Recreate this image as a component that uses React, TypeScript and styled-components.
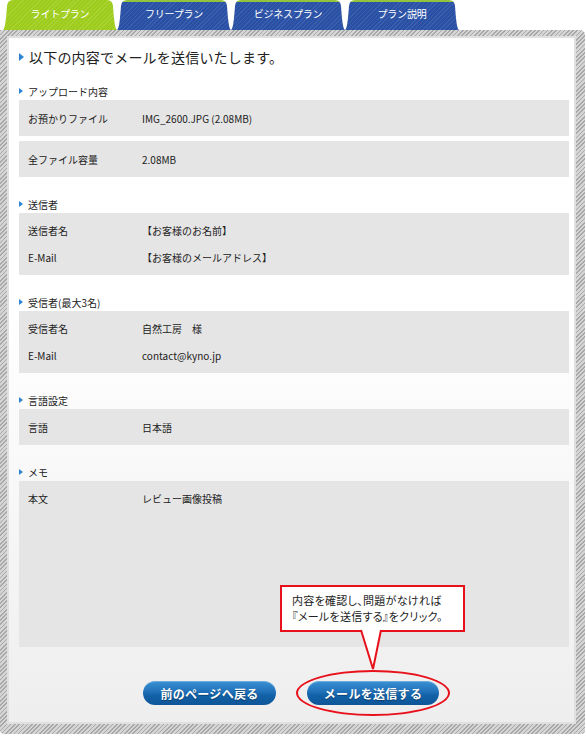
import React from 'react';
import styled, { createGlobalStyle } from 'styled-components';

const Global = createGlobalStyle`
  html, body { margin: 0; padding: 0; background: #fff; }
  body { font-family: "Noto Sans CJK JP", "Noto Sans", sans-serif; color: #222; }
`;

const Page = styled.div`
  width: 586px;
`;

const TabBar = styled.div`
  display: flex;
  height: 30px;
  padding-left: 3px;
`;

const Tab = styled.div<{ $active?: boolean }>`
  width: 114px;
  height: 30px;
  box-sizing: border-box;
  clip-path: path('M0 30 C2 29 3 20 4 6 Q4.5 0 10 0 L104 0 Q109.5 0 110 6 C111 20 112 29 114 30 Z');
  background: ${(p) =>
    p.$active
      ? 'repeating-linear-gradient(135deg, #9dcc1c 0 2px, #a8d332 2px 3px)'
      : 'repeating-linear-gradient(135deg, #2a50a3 0 2px, #3a5fb0 2px 3px)'};
  border-top: ${(p) => (p.$active ? '0' : '2px solid #93c33a')};
  padding-top: ${(p) => (p.$active ? 7 : 5)}px;
  color: #fff;
  font-size: 10px;
  line-height: 13px;
  letter-spacing: -0.2px;
  text-align: center;
`;

const Frame = styled.div`
  width: 585px;
  box-sizing: border-box;
  padding: 6px 9px 10px 7px;
  background: repeating-linear-gradient(135deg, #a8a8a8 0 1.2px, #d5d5d5 1.2px 3px);
  border-radius: 0 5px 4px 4px;
`;

const Panel = styled.div`
  border: 2px solid #e0e0e0;
  background: linear-gradient(#fff 0%, #fff 40%, #eeeeee 100%);
  padding: 9px 5px 17px 10px;
`;

const Heading = styled.h1`
  margin: 0 0 15px;
  display: flex;
  align-items: center;
  gap: 5px;
  font-size: 14px;
  font-weight: normal;
  line-height: 20px;
  letter-spacing: 0.2px;
  color: #222;
  &::before {
    content: '';
    border-left: 5px solid #2d84d4;
    border-top: 4px solid transparent;
    border-bottom: 4px solid transparent;
  }
`;

const SectionTitle = styled.h2<{ $first?: boolean }>`
  margin: ${(p) => (p.$first ? 0 : 18)}px 0 0;
  height: 18px;
  display: flex;
  align-items: center;
  gap: 5px;
  font-size: 10px;
  font-weight: normal;
  color: #222;
  &::before {
    content: '';
    border-left: 4px solid #2d84d4;
    border-top: 3.5px solid transparent;
    border-bottom: 3.5px solid transparent;
  }
`;

const Stack = styled.div`
  display: flex;
  flex-direction: column;
  gap: 5px;
`;

const Block = styled.div<{ $pad?: number; $minH?: number }>`
  background: #e5e5e5;
  padding: ${(p) => p.$pad ?? 0}px 0;
  min-height: ${(p) => p.$minH ?? 0}px;
  box-sizing: border-box;
`;

const Row = styled.div<{ $h: number }>`
  display: grid;
  grid-template-columns: 114px 1fr;
  align-items: center;
  height: ${(p) => p.$h}px;
  padding-left: 9px;
  font-size: 10px;
  color: #222;
`;

const Actions = styled.div`
  display: flex;
  justify-content: center;
  gap: 31px;
  margin-top: 34px;
  padding-right: 6px;
`;

const SendWrap = styled.div`
  position: relative;
`;

const PillButton = styled.button<{ $w: number }>`
  display: block;
  width: ${(p) => p.$w}px;
  height: 24px;
  padding: 0;
  border: none;
  border-radius: 12px;
  background: linear-gradient(#3b92d4 0%, #1f70b8 45%, #1262a8 60%, #0d5597 100%);
  box-shadow: inset 0 1px 0 rgba(255, 255, 255, 0.25);
  color: #fff;
  font-family: "Noto Sans CJK JP", sans-serif;
  font-size: 12px;
  font-weight: bold;
  letter-spacing: 0.3px;
  text-shadow: 0 1px 1px rgba(0, 0, 0, 0.35);
`;

const Ellipse = styled.div`
  position: absolute;
  inset: -11px;
  border: 2px solid #e8101a;
  border-radius: 50%;
  pointer-events: none;
`;

const Callout = styled.div`
  position: absolute;
  left: -27px;
  top: -96px;
  width: 185px;
  height: 47px;
  box-sizing: border-box;
  border: 2px solid #e8101a;
  background: #fff;
  padding: 5px 0 0 10px;
  font-size: 11px;
  line-height: 16px;
  font-feature-settings: "palt";
  letter-spacing: 0.3px;
  white-space: nowrap;
  color: #222;
`;

const CalloutLine = styled.div`
  height: 16px;
`;

const Pointer = styled.svg`
  position: absolute;
  left: 53px;
  top: -51px;
  overflow: visible;
`;

const App: React.FC = () => (
  <Page>
    <Global />
    <TabBar>
      <Tab $active>ライトプラン</Tab>
      <Tab>フリープラン</Tab>
      <Tab>ビジネスプラン</Tab>
      <Tab>プラン説明</Tab>
    </TabBar>
    <Frame>
      <Panel>
        <Heading>以下の内容でメールを送信いたします。</Heading>

        <SectionTitle $first>アップロード内容</SectionTitle>
        <Stack>
          <Block>
            <Row $h={36}>
              <span>お預かりファイル</span>
              <span>IMG_2600.JPG (2.08MB)</span>
            </Row>
          </Block>
          <Block>
            <Row $h={36}>
              <span>全ファイル容量</span>
              <span>2.08MB</span>
            </Row>
          </Block>
        </Stack>

        <SectionTitle>送信者</SectionTitle>
        <Block $pad={4}>
          <Row $h={27}>
            <span>送信者名</span>
            <span>【お客様のお名前】</span>
          </Row>
          <Row $h={27}>
            <span>E-Mail</span>
            <span>【お客様のメールアドレス】</span>
          </Row>
        </Block>

        <SectionTitle>受信者(最大3名)</SectionTitle>
        <Block $pad={4}>
          <Row $h={27}>
            <span>受信者名</span>
            <span>自然工房　様</span>
          </Row>
          <Row $h={27}>
            <span>E-Mail</span>
            <span>contact@kyno.jp</span>
          </Row>
        </Block>

        <SectionTitle>言語設定</SectionTitle>
        <Block>
          <Row $h={36}>
            <span>言語</span>
            <span>日本語</span>
          </Row>
        </Block>

        <SectionTitle>メモ</SectionTitle>
        <Block $pad={4} $minH={166}>
          <Row $h={27}>
            <span>本文</span>
            <span>レビュー画像投稿</span>
          </Row>
        </Block>

        <Actions>
          <PillButton $w={133}>前のページへ戻る</PillButton>
          <SendWrap>
            <PillButton $w={132}>メールを送信する</PillButton>
            <Ellipse />
            <Callout>
              <CalloutLine>内容を確認し、問題がなければ</CalloutLine>
              <CalloutLine>『メールを送信する』をクリック。</CalloutLine>
            </Callout>
            <Pointer width="22" height="40" viewBox="0 0 22 40">
              <polygon points="1,0 21,0 13,40" fill="#fff" />
              <polyline points="1,0 13,39 21,0" fill="none" stroke="#e8101a" strokeWidth="2" />
            </Pointer>
          </SendWrap>
        </Actions>
      </Panel>
    </Frame>
  </Page>
);

export default App;
